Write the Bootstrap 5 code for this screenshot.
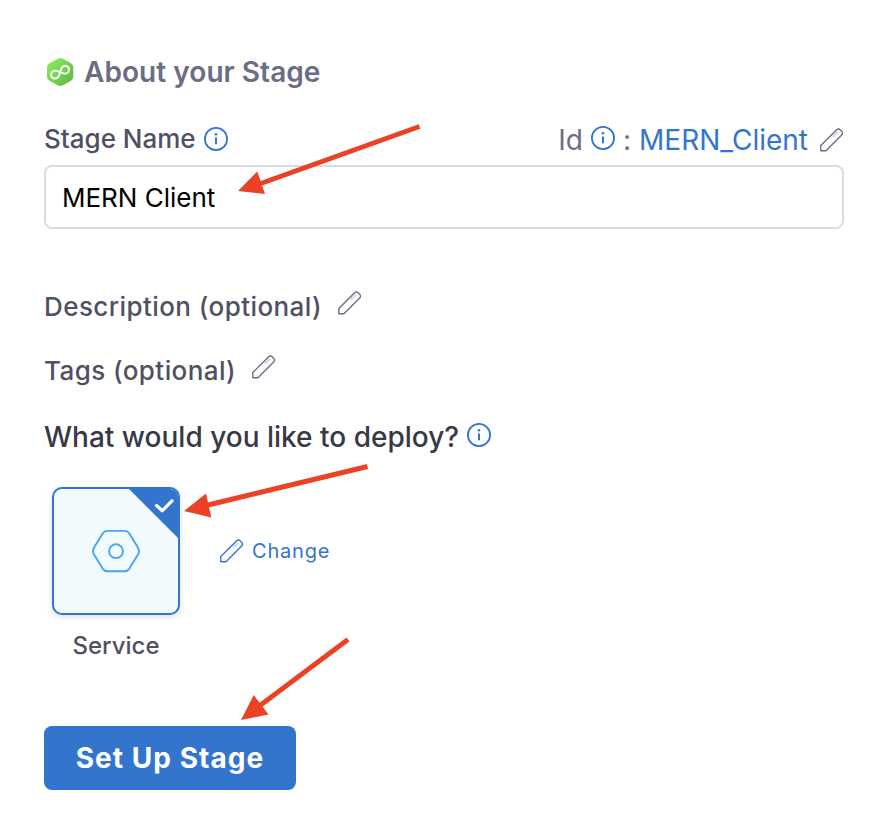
<!DOCTYPE html>
<html lang="en">
<head>
<meta charset="utf-8">
<meta name="viewport" content="width=device-width, initial-scale=1">
<title>About your Stage</title>
<link href="https://cdn.jsdelivr.net/npm/bootstrap@5.3.0/dist/css/bootstrap.min.css" rel="stylesheet">
<style>
body{font-family:Inter,"Liberation Sans",sans-serif;background:#fff;color:#4f5162}
.stage-form{width:886px;height:834px;padding:56px 42px 0 44px;overflow:hidden}
.stage-form svg{display:block;flex:none}
.stage-title{font-size:28px;line-height:32px;font-weight:600;color:#6b6d85;letter-spacing:.05px}
.field-label{font-size:26px;line-height:32px;font-weight:500}
.label-row{margin-top:35px;height:32px}
.id-part{font-size:28px;line-height:32px;color:#6b6d85;padding-top:2px}
.id-info{margin:-4px 8px 0 8px}
.id-colon{margin-right:8px}
.id-value{margin-right:12px}
.brand{color:#3375cd}
.stage-input{height:64px;margin-top:10px;border:2px solid #d9dae6;border-radius:8px;padding:0 16px;font-size:26px;color:#000}
.stage-input:focus{color:#000}
.optional-row{letter-spacing:.42px}
.optional-row svg{margin:-8px 0 0 16px;color:#6b6d85}
.desc-row{margin-top:62px}
.tags-row{margin-top:32px}
.ask-row{margin-top:34px}
.ask-row svg{margin:-4px 0 0 8px}
.question{font-size:28px;line-height:32px;font-weight:500;color:#383946}
.choice-row{margin-top:34px;padding-left:8px}
.service-tile{width:128px;height:128px;border:2px solid #3375cd;border-radius:10px;background:#f1fafd;box-shadow:0 2px 6px rgba(40,41,61,.16);overflow:hidden}
.tile-corner{top:-2px;right:-2px}
.service-name{font-size:24px;line-height:30px;font-weight:500;margin-top:16px}
.change-link{font-size:20px;line-height:24px;letter-spacing:.8px;margin:52px 0 0 40px}
.setup-btn{width:252px;height:64px;margin-top:65px;padding:0;border:0;border-radius:8px;background:#3375cd;color:#fff;font-size:28px;font-weight:700;letter-spacing:1.05px}
.arrows{inset:0;pointer-events:none}
</style>
</head>
<body>
<svg width="0" height="0" class="position-absolute" aria-hidden="true">
  <symbol id="info" viewBox="0 0 24 24"><circle cx="12" cy="12" r="11.1" fill="none" stroke="#3375cd" stroke-width="1.8"/><path d="M12 10.6v6.6" stroke="#3375cd" stroke-width="2"/><circle cx="12" cy="7.2" r="1.3" fill="#3375cd"/></symbol>
  <symbol id="pencil" viewBox="0 0 24 24"><path d="M.8 22.7V17.6L16.4 1.9Q18.4 .2 20.4 1.9L21.7 3.200Q23.300 5.200 21.700 7.100L6 22.700Z" fill="none" stroke="currentColor" stroke-width="1.35" stroke-linejoin="round"/><path d="M12.800 8.700L18 3.900" stroke="currentColor" stroke-width="2.600" opacity=".22"/></symbol>
</svg>
<main class="stage-form position-relative">
  <div class="d-flex align-items-center gap-2">
    <svg width="32" height="32" viewBox="0 0 32 32">
      <defs><linearGradient id="leaf" x1="0" y1="0" x2="1" y2="1"><stop offset="0" stop-color="#87f45e"/><stop offset="1" stop-color="#62b245"/></linearGradient></defs>
      <path d="M13.8 2.7Q16.3 1.3 18.8 2.7L27 7.3Q29.3 8.6 29.3 11.2V20.8Q29.3 23.4 27 24.7L18.8 29.3Q16.3 30.7 13.8 29.3L5.4 24.7Q3 23.4 3 20.8V11.2Q3 8.6 5.4 7.3Z" fill="url(#leaf)"/>
      <path d="M14.8 15.8C12.2 14 7.4 14.2 7.1 18.6C7 23.400 13.200 23.900 15.100 19.600L17.300 12.900C19 8.400 25 8.900 25 13.500C24.900 18 20 18.400 17.500 16.400" fill="none" stroke="#fff" stroke-width="1.8" stroke-linecap="round"/>
    </svg>
    <h1 class="stage-title mb-0">About your Stage</h1>
  </div>
  <div class="label-row d-flex justify-content-between align-items-center">
    <div class="d-flex align-items-center gap-2"><label class="field-label" for="stage">Stage Name</label><svg width="24" height="24"><use href="#info"/></svg></div>
    <div class="id-part d-flex align-items-center"><span>Id</span><svg class="id-info" width="24" height="24"><use href="#info"/></svg><span class="id-colon">:</span><span class="brand id-value">MERN_Client</span><svg width="24" height="24"><use href="#pencil"/></svg></div>
  </div>
  <input id="stage" class="stage-input form-control shadow-none" value="MERN Client">
  <div class="d-flex align-items-center optional-row desc-row"><span class="field-label">Description (optional)</span><svg width="24" height="24"><use href="#pencil"/></svg></div>
  <div class="d-flex align-items-center optional-row tags-row"><span class="field-label">Tags (optional)</span><svg width="24" height="24"><use href="#pencil"/></svg></div>
  <div class="d-flex align-items-center ask-row"><h2 class="question mb-0">What would you like to deploy?</h2><svg width="24" height="24"><use href="#info"/></svg></div>
  <div class="choice-row d-flex align-items-start">
    <div class="text-center">
      <div class="service-tile position-relative d-flex align-items-center justify-content-center">
        <svg width="48" height="44" viewBox="0 0 48 44" fill="none" stroke="#4aa4f0" stroke-width="1.9"><path d="M15.2 1.9H32.8Q35.6 1.9 37.4 4.600L46 18.800Q48 22.200 46 25.600L37.400 39.600Q35.600 42.300 32.800 42.300H15.200Q12.400 42.300 10.600 39.600L2 25.600Q0 22.200 2 18.800L10.600 4.600Q12.400 1.900 15.200 1.900Z"/><circle cx="24" cy="22.200" r="6.900"/></svg>
        <svg class="tile-corner position-absolute" width="53" height="53" viewBox="0 0 53 53"><path d="M0 0H53V53Z" fill="#3375cd"/><path d="M29.500 18.500L35.300 23.700L45 13.800" fill="none" stroke="#fff" stroke-width="3.200" stroke-linecap="round" stroke-linejoin="round"/></svg>
      </div>
      <div class="service-name">Service</div>
    </div>
    <a class="change-link brand d-flex align-items-center gap-2 text-decoration-none" href="#"><svg width="24" height="24"><use href="#pencil"/></svg>Change</a>
  </div>
  <button type="button" class="setup-btn btn">Set Up Stage</button>
  <svg class="arrows position-absolute" width="886" height="834" viewBox="0 0 886 834" fill="#eb4226" stroke="#eb4226" stroke-width="5">
    <path d="M419.500 126.500L258 184.500"/><path d="M238 191L257.300 171.500L265 194Z" stroke="none"/>
    <path d="M367.500 466.500L204 506"/><path d="M184 511L206 493.500L211.300 517.500Z" stroke="none"/>
    <path d="M348 639.500L258 707"/><path d="M241 720L253.700 695L268.500 714.500Z" stroke="none"/>
  </svg>
</main>
<script src="https://cdn.jsdelivr.net/npm/bootstrap@5.3.0/dist/js/bootstrap.bundle.min.js"></script>
</body>
</html>
